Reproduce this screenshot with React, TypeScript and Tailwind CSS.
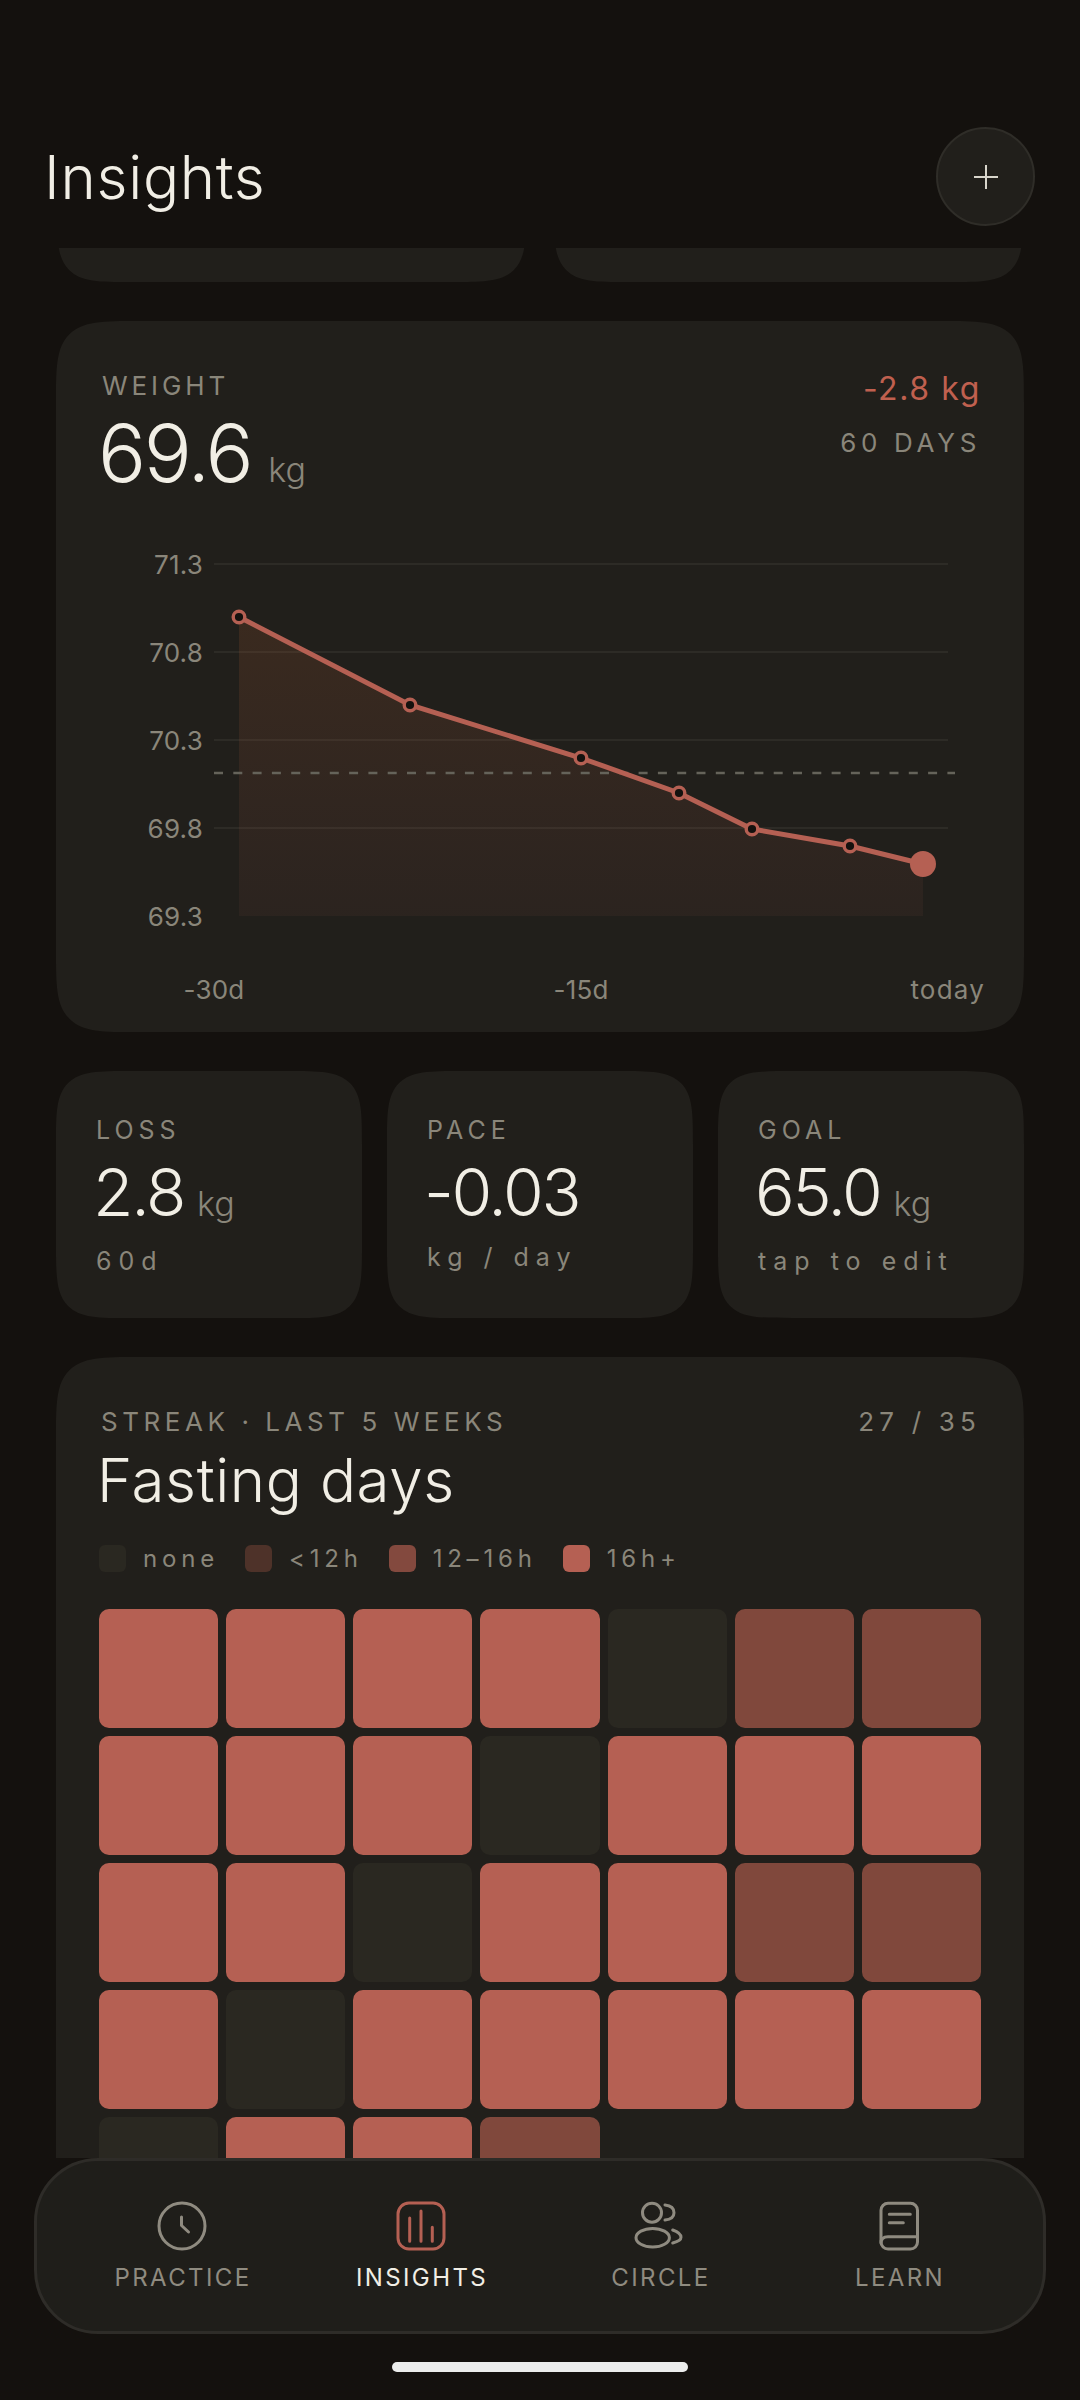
import React from 'react';

const CELLS: Record<string, string> = {
  H: 'bg-[#b56053]',
  M: 'bg-[#80483c]',
  N: 'bg-[#2a2821]',
  E: '',
};

const WEEKS = ['HHHHNMM', 'HHHNHHH', 'HHNHHMM', 'HNHHHHH', 'NHHMEEE'];

const POINTS = [
  [183, 97],
  [354, 185],
  [525, 238],
  [623, 273],
  [696, 309],
  [794, 326],
  [867, 344],
];

const Y_LABELS = [
  ['71.3', 44],
  ['70.8', 132],
  ['70.3', 220],
  ['69.8', 308],
  ['69.3', 396],
] as const;

const WeightChart = () => {
  const line = POINTS.map((p) => p.join(',')).join(' ');
  return (
    <svg viewBox="0 0 968 512" className="block w-[968px] h-[512px]">
      <defs>
        <linearGradient id="fill" x1="0" y1="0" x2="0" y2="1">
          <stop offset="0" stopColor="#b56030" stopOpacity="0.17" />
          <stop offset="1" stopColor="#b56053" stopOpacity="0.07" />
        </linearGradient>
      </defs>
      {[44, 132, 220, 308].map((y) => (
        <line key={y} x1="158" x2="892" y1={y} y2={y} stroke="#2d2b26" strokeWidth="2" />
      ))}
      <polygon points={`${line} 867,396 183,396`} fill="url(#fill)" />
      <line x1="158" x2="899" y1="253" y2="253" stroke="#65635a" strokeWidth="2.4" strokeDasharray="9 10.3" />
      <polyline points={line} fill="none" stroke="#b56053" strokeWidth="5" />
      {POINTS.slice(0, 6).map(([x, y]) => (
        <circle key={x} cx={x} cy={y} r="5.8" fill="#14110e" stroke="#b56053" strokeWidth="3.4" />
      ))}
      <circle cx="867" cy="344" r="13" fill="#b56053" />
      <g className="font-['Inter',sans-serif] text-[26px]" fill="#8a867a">
        {Y_LABELS.map(([label, y]) => (
          <text key={label} x="147" y={y + 10} textAnchor="end" letterSpacing="0.2">
            {label}
          </text>
        ))}
        <text x="158" y="479" textAnchor="middle" letterSpacing="0.2">-30d</text>
        <text x="525" y="479" textAnchor="middle" letterSpacing="0.2">-15d</text>
        <text x="929" y="479" textAnchor="end" letterSpacing="1.2">today</text>
      </g>
    </svg>
  );
};

const Stat = ({ label, value, unit, note, noteClass }: { label: string; value: string; unit?: string; note: string; noteClass?: string }) => (
  <div className="h-[247px] rounded-[76px] [corner-shape:squircle] bg-[#211f1b] pl-[40px] pt-[43px]">
    <div className="text-[25px] leading-[32px] tracking-[0.2em] text-[#8a867a]">{label}</div>
    <div className="mt-[10px] -ml-[3px] flex items-baseline h-[72px]">
      <span className="text-[66px] leading-[72px] font-light tracking-[-0.035em] text-[#f1eee5]">{value}</span>
      {unit && <span className="ml-[13px] text-[34px] text-[#8a867a] font-light">{unit}</span>}
    </div>
    <div className={`text-[25px] leading-[32px] tracking-[0.28em] text-[#8a867a] ${noteClass ?? 'mt-[17px]'}`}>{note}</div>
  </div>
);

const Legend = ({ swatch, label }: { swatch: string; label: string }) => (
  <div className="flex items-center gap-[17px]">
    <span className={`w-[27px] h-[27px] rounded-[6px] ${swatch}`} />
    <span className="text-[24px] leading-[27px] tracking-[0.2em] text-[#8a867a]">{label}</span>
  </div>
);

const NavItem = ({ label, active, children }: { label: string; active?: boolean; children: React.ReactNode }) => (
  <div className="flex flex-col items-center">
    <svg viewBox="0 0 52 52" className="w-[52px] h-[52px]" fill="none" stroke={active ? '#b56053' : '#8f8b80'} strokeWidth="3" strokeLinecap="round" strokeLinejoin="round">
      {children}
    </svg>
    <span className={`mt-[11px] ml-[3px] text-[24px] leading-[30px] tracking-[0.1em] ${active ? 'text-[#f1eee5]' : 'text-[#8f8b80]'}`}>{label}</span>
  </div>
);

const Stub = () => (
  <div className="h-[34px] flex-1 flex items-end overflow-hidden">
    <div className="h-[160px] w-full shrink-0 rounded-[76px] [corner-shape:squircle] bg-[#211f1b]" />
  </div>
);

const App = () => {
  return (
    <div className="w-[1080px] h-[2400px] flex flex-col overflow-hidden bg-[#14110e] font-['Inter',sans-serif]">
      <header className="h-[248px] shrink-0 pt-[127px] pl-[44px] pr-[45px] flex items-start justify-between">
        <h1 className="h-[99px] flex items-center text-[60px] font-light tracking-[0.012em] text-[#f1eee5]">Insights</h1>
        <button className="w-[99px] h-[99px] rounded-full bg-[#211f1b] border-2 border-[#2f2d28] flex items-center justify-center">
          <svg viewBox="0 0 24 24" className="w-[24px] h-[24px]" fill="none" stroke="#d8d5cb" strokeWidth="2">
            <path d="M12 0v24M0 12h24" />
          </svg>
        </button>
      </header>

      <main className="h-[1910px] shrink-0 overflow-hidden">
        <div className="flex gap-[28px] mx-[57px]">
          <Stub />
          <Stub />
        </div>

        <section className="mt-[39px] mx-[56px] h-[711px] rounded-[84px] [corner-shape:squircle] bg-[#211f1b]">
          <div className="h-[199px] pl-[46px] pr-[43px] pt-[49px] flex justify-between">
            <div>
              <div className="text-[26px] leading-[32px] tracking-[0.15em] text-[#8a867a]">WEIGHT</div>
              <div className="mt-[11px] -ml-[4px] flex items-baseline">
                <span className="text-[80px] leading-[80px] font-light tracking-[-0.03em] text-[#f1eee5]">69.6</span>
                <span className="ml-[17px] text-[34px] font-light text-[#8a867a]">kg</span>
              </div>
            </div>
            <div className="text-right">
              <div className="text-[32px] leading-[38px] text-[#c0604f] tracking-[0.05em]">-2.8 kg</div>
              <div className="mt-[19px] text-[26px] leading-[32px] tracking-[0.18em] text-[#8a867a]">60 DAYS</div>
            </div>
          </div>
          <WeightChart />
        </section>

        <div className="mt-[39px] mx-[56px] grid grid-cols-3 gap-[25px]">
          <Stat label="LOSS" value="2.8" unit="kg" note="60d" />
          <Stat label="PACE" value="-0.03" note="kg / day" noteClass="mt-[13px]" />
          <Stat label="GOAL" value="65.0" unit="kg" note="tap to edit" />
        </div>

        <section className="mt-[39px] mx-[56px] h-[900px] rounded-[84px] [corner-shape:squircle] bg-[#211f1b] px-[43px] pt-[49px]">
          <div className="flex justify-between text-[26px] leading-[32px] text-[#8a867a]">
            <span className="ml-[2px] tracking-[0.175em]">STREAK · LAST 5 WEEKS</span>
            <span className="tracking-[0.2em]">27 / 35</span>
          </div>
          <h2 className="mt-[6px] -ml-[2px] text-[60px] leading-[72px] font-light tracking-[0.01em] text-[#f1eee5]">Fasting days</h2>
          <div className="mt-[29px] flex gap-[26px]">
            <Legend swatch="bg-[#2a2821]" label="none" />
            <Legend swatch="bg-[#4e3229]" label="<12h" />
            <Legend swatch="bg-[#83493e]" label="12–16h" />
            <Legend swatch="bg-[#b56053]" label="16h+" />
          </div>
          <div className="mt-[37px] grid grid-cols-7 gap-[8px]">
            {WEEKS.join('').split('').map((c, i) => (
              <div key={i} className={`h-[119px] rounded-[10px] ${CELLS[c]}`} />
            ))}
          </div>
        </section>
      </main>

      <nav className="mx-[34px] h-[176px] shrink-0 rounded-[64px] bg-[#1f1e1a] border-[3px] border-[#2e2c28] px-[25px] pt-[39px] grid grid-cols-4">
        <NavItem label="PRACTICE">
          <circle cx="26" cy="26" r="23" />
          <path d="M25.5 17v8.5L32.5 32" />
        </NavItem>
        <NavItem label="INSIGHTS" active>
          <rect x="3" y="3" width="46" height="46" rx="11" />
          <path d="M14.7 18v23.3M26 11v30.3M37.3 27.3v14" />
        </NavItem>
        <NavItem label="CIRCLE">
          <circle cx="18" cy="12.7" r="9.5" />
          <ellipse cx="18.7" cy="37.7" rx="16.7" ry="9.3" />
          <path d="M31 5Q40 6 40 12.7Q40 19 31 20M38.7 30Q47 33 47 37.3Q47 41 38.7 43" />
        </NavItem>
        <NavItem label="LEARN">
          <rect x="8" y="3.3" width="36.5" height="45.7" rx="7" />
          <path d="M8 43q0-6.3 7-6.3h29.5M16.3 14.3h21M16.3 22.7h14" />
        </NavItem>
      </nav>

      <div className="mt-[28px] mx-auto w-[296px] h-[10px] rounded-full bg-[#ecedec]" />
    </div>
  );
};

export default App;
